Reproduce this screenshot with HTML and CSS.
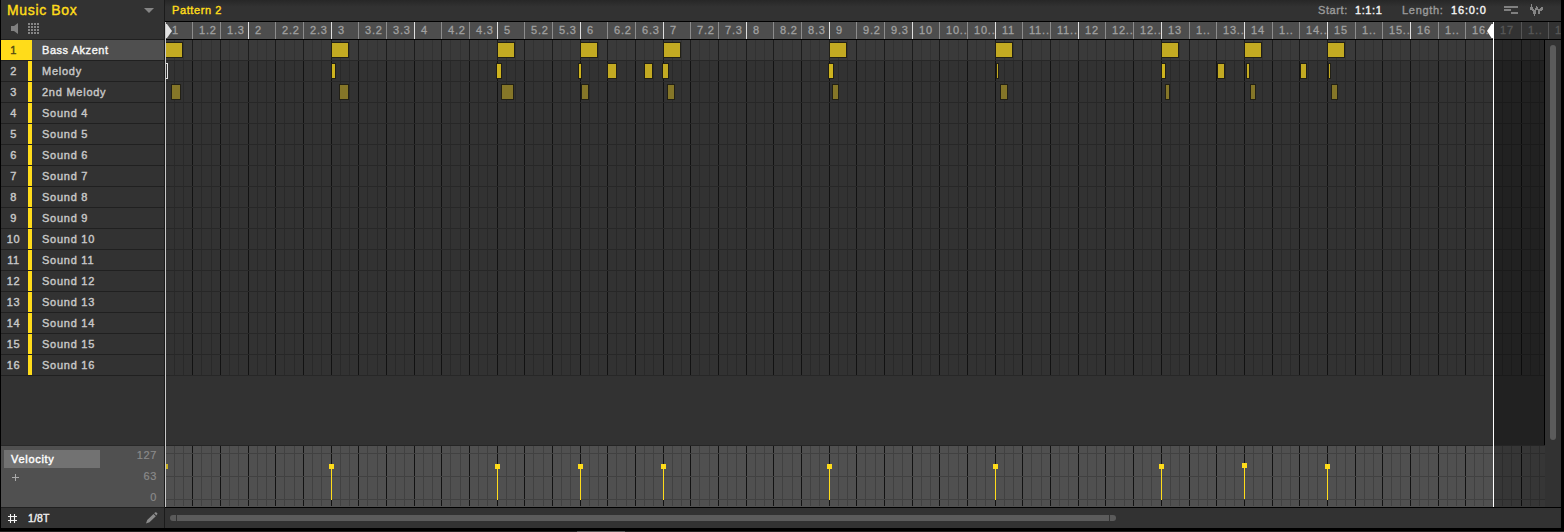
FILE: index.html
```html
<!DOCTYPE html>
<html lang="en">
<head>
<meta charset="utf-8">
<title>Pattern Editor</title>
<link rel="stylesheet" href="styles.css">
</head>
<body>
<div class="app">
  <aside class="sidebar">
    <header class="group">
      <div class="group-title"><span>Music Box</span><svg width="10" height="5" viewBox="0 0 10 5"><path d="M0 0h10L5 5z" fill="#858585"/></svg></div>
      <div class="group-tools">
        <svg width="8" height="11" viewBox="0 0 8 11"><path d="M0 3h3L7 0v11L3 8H0z" fill="#808080"/></svg>
        <svg class="pads" width="12" height="11" viewBox="0 0 12 11"><path d="M0 1h12M0 4h12M0 7h12M0 10h12" stroke="#858585" stroke-width="2" stroke-dasharray="2 1"/></svg>
      </div>
    </header>
    <ol class="sounds" id="sounds"></ol>
    <div class="side-gap"></div>
    <section class="lane-info">
      <div class="lane-names"><div class="lane-active">Velocity</div><svg class="plus" width="7" height="7" viewBox="0 0 7 7"><path d="M3.500 0v7M0 3.500h7" stroke="#aaa"/></svg></div>
      <div class="scale"><span>127</span><span>63</span><span>0</span></div>
    </section>
    <footer class="quantize">
      <svg width="9" height="9" viewBox="0 0 9 9"><path d="M2.500 0v9M6.500 0v9M0 2.500h9M0 6.500h9" stroke="#f4f4f4" stroke-width="1.100"/></svg>
      <span>1/8T</span>
      <svg class="pencil" width="12" height="12" viewBox="0 0 12 12"><path d="M0 11.500L1.200 8 7.500 2 9.800 4.200 3.500 10.200zM8.200 1.300L9.300.3Q10 0 10.900.7 11.900 1.500 11.200 2.300L10.400 3.500z" fill="#8c8c8c"/></svg>
    </footer>
  </aside>
  <main class="editor">
    <header class="pattern-bar">
      <span class="pattern-name">Pattern 2</span>
      <span class="label start">Start:</span><span class="value start-value">1:1:1</span>
      <span class="label length">Length:</span><span class="value length-value">16:0:0</span>
      <svg class="align-icon" width="14" height="8" viewBox="0 0 14 8"><path d="M0 1h14M0 4h7M7 7h7" stroke="#808080" stroke-width="2"/></svg>
      <svg class="wave-icon" width="14" height="12" viewBox="0 0 14 12"><path d="M.5 3v3M1.500 0v6M2.500 3v4M3.500 5v5M4.500 6v6M5.500 4v6M6.500 2v4M7.500 3v3M8.500 5v5M9.500 5v5M10.500 4v3M11.500 3v4M12.500 3v3" stroke="#858585"/></svg>
    </header>
    <div class="ruler" id="ruler"></div>
    <div class="body">
      <div class="canvas" id="canvas">
        <div class="bars" id="bars"></div>
        <div class="rows" id="rows"></div>
        <div class="outside"></div>
      </div>
      <div class="vscroll"><div class="vthumb"></div></div>
    </div>
    <div class="velocity" id="velocity">
      <div class="bars" id="vbars"></div>
      <div class="levels"><i></i><i></i><i></i></div>
      <div class="outside"></div>
    </div>
    <div class="hscroll"><div class="hthumb"></div></div>
    <div class="playhead"></div>
    <div class="endline"></div>
    <svg class="start-flag" width="7" height="14" viewBox="0 0 7 14"><path d="M0 0h1L6 7 1 14H0z" fill="#e2e2e2"/></svg>
    <svg class="end-flag" width="6" height="14" viewBox="0 0 6 14"><path d="M6 0H4.500L0 7l4.500 7H6z" fill="#fff"/></svg>
  </main>
  <div class="dock"></div>
</div>
<script src="script.js"></script>
</body>
</html>
```
FILE: styles.css
```css
* { box-sizing: border-box; }
body { margin: 0; background: #000; font: 11px/20px "Liberation Sans", Arial, sans-serif; letter-spacing: .6px; -webkit-text-stroke: .4px; color: #c8c8c8; overflow: hidden; }
svg { display: block; flex: none; }
.app { position: relative; width: 1564px; height: 532px; padding: 0 3px 4px 1px; display: flex; background: #000; }
.sidebar { width: 164px; height: 528px; display: flex; flex-direction: column; background: #323232; border-right: 1px solid #1b1b1b; }
.group { height: 39px; flex: none; }
.group-title { display: flex; justify-content: space-between; align-items: center; height: 20px; padding: 0 10px 0 6px; color: #ffdc1a; font-size: 14px; letter-spacing: .65px; }
.group-tools { display: flex; gap: 8px; padding: 3px 0 0 10px; }
.pads { margin-left: 1px; }
.sounds { list-style: none; margin: 0; padding: 0; border-top: 1px solid #202020; }
.sound { display: flex; height: 21px; border-bottom: 1px solid #202020; }
.num { width: 31px; padding-right: 2px; text-align: center; border-right: 4px solid #ffdc1a; }
.name { flex: 1; padding-left: 10px; letter-spacing: .75px; }
.selected .num { background: #ffdc1a; color: #554b12; }
.selected .name { background: #4f4f4f; color: #f5f5f5; letter-spacing: .55px; }
.side-gap { flex: 1; }
.lane-info { height: 62px; display: flex; justify-content: space-between; background: #505050; border-top: 1px solid #282828; }
.lane-active { width: 96px; height: 18px; margin: 4px 0 0 3px; padding-left: 7px; background: #727272; color: #fff; line-height: 18px; letter-spacing: .7px; }
.plus { margin: 6px 0 0 11px; }
.scale { padding-right: 7px; color: #8a8a8a; text-align: right; line-height: 21px; margin-top: -1px; -webkit-text-stroke: .2px; }
.scale span { display: block; }
.quantize { display: flex; height: 21px; flex: none; align-items: center; padding-left: 7px; border-top: 1px solid #202020; color: #eee; font-size: 10.5px; letter-spacing: .1px; }
.quantize span { margin-left: 11px; }
.pencil { margin-left: auto; margin-right: 6px; }
.editor { position: relative; flex: 1; height: 528px; background: #323232; overflow: hidden; }
.pattern-bar { height: 21px; display: flex; align-items: center; padding: 0 17px 1px 7px; background: linear-gradient(#272727, #323232 7px); white-space: nowrap; }
.pattern-name { color: #ffdc1a; margin-right: auto; }
.label { width: 37px; color: #999; }
.label.length { width: 49px; letter-spacing: .7px; }
.value { color: #f4f4f4; }
.start-value { width: 47px; }
.length-value { width: 53px; letter-spacing: .85px; }
.align-icon { margin-right: 12px; }
.ruler { display: flex; height: 19px; border: solid #000; border-width: 1px 0; background: #4d4d4d; overflow: hidden; }
.tick { flex: none; height: 17px; padding-left: 6px; border-left: 1px solid #8c8c8c; color: #a0a0a0; line-height: 17px; white-space: nowrap; overflow: hidden; letter-spacing: .8px; -webkit-text-stroke: .3px; }
.tick.bar { border-color: #dedede; }
.tick.off { background: #323232; color: #575757; border-color: #555; }
.body { display: flex; height: 405px; }
.canvas { position: relative; width: 1380px; height: 405px; border-right: 1px solid #000; overflow: hidden; }
.bars { display: flex; height: 335px; }
.beat { display: flex; flex: none; border-left: 1px solid #121212; }
.beat i { width: 9px; border-left: 1px solid #292929; }
.beat i:first-child { border: 0; width: 8px; }
.beat i.wide { width: 10px; }
.rows { position: absolute; inset: 0; }
.row { position: relative; height: 21px; border-bottom: 1px solid #272727; }
.row:first-child { background: rgba(255,255,255,.045); }
.note { position: absolute; top: 2px; height: 16px; border: 1px solid #222015; background: #c3aa22; }
.note.bright { background: #ceb31e; }
.note.soft { background: #857628; }
.note.ghost { background: #323232; border-color: #e3e3e3; }
.outside { position: absolute; left: 1329px; right: 0; top: 0; bottom: 0; background: rgba(0,0,0,.32); }
.vscroll { flex: 1; padding: 5px 0 0 5px; }
.vthumb { width: 6px; height: 395px; border-radius: 3px; background: #5b5b5b; }
.velocity { position: relative; width: 1380px; height: 62px; border-top: 1px solid #252525; background: #505050; overflow: hidden; }
.velocity .bars { height: 60px; }
.velocity .beat i { border-color: #414141; }
.levels { position: absolute; inset: 7px 0 0; display: flex; flex-direction: column; gap: 22px; }
.levels i { height: 1px; background: #414141; }
.hit { position: absolute; width: 5px; height: 36px; background: linear-gradient(#ffdc1a, #ffdc1a) 2px 5px / 1px 31px no-repeat, linear-gradient(#ffdc1a, #ffdc1a) 0 0 / 5px 5px no-repeat; }
.hit.first { background: linear-gradient(#c9af20, #c9af20) 0 0 / 5px 5px no-repeat; }
.hscroll { height: 21px; border-top: 1px solid #000; padding: 7px 0 0 5px; }
.hthumb { width: 946px; height: 6px; border-radius: 3px; background: linear-gradient(90deg, #5b5b5b 6px, #333 6px 7px, #5b5b5b 7px 939px, #333 939px 940px, #5b5b5b 940px); }
.playhead { position: absolute; left: 0; top: 22px; width: 1px; height: 485px; background: #c8c8c8; }
.endline { position: absolute; left: 1328px; top: 22px; width: 1px; height: 485px; background: #fff; }
.start-flag { position: absolute; left: 1px; top: 24px; }
.end-flag { position: absolute; left: 1322px; top: 24px; }
.dock { position: absolute; left: 0; right: 0; bottom: 0; height: 1px; background: linear-gradient(90deg, #222 577px, #555 577px 625px, #222 625px); }
```
FILE: script.js
```js
const el = (parent, cls, text = '', tag = 'div') => {
  const node = document.createElement(tag);
  node.className = cls;
  node.textContent = text;
  parent.appendChild(node);
  return node;
};
const get = id => document.getElementById(id);

const names = ['Bass Akzent', 'Melody', '2nd Melody'];
for (let n = 1; n <= 16; n++) {
  const item = el(get('sounds'), n === 1 ? 'sound selected' : 'sound', '', 'li');
  el(item, 'num', n, 'span');
  el(item, 'name', names[n - 1] || 'Sound ' + n, 'span');
}

const ORIGIN = 165;
const labels = {
  '10.2': '10..', '10.3': '10..', '11.2': '11..', '11.3': '11..', '12.2': '12..', '12.3': '12..',
  '13.2': '1..', '13.3': '13..', '14.2': '1..', '14.3': '14..', '15.2': '1..', '15.3': '15..',
  '16.2': '1..', '16.3': '16.', '17.2': '1..', '17.3': '1'
};
for (let bar = 1; bar <= 17; bar++) {
  const widths = bar < 13 ? [27, 28, 28] : [28, 27, 28];
  widths.forEach((w, i) => {
    const key = i ? bar + '.' + (i + 1) : String(bar);
    const tick = el(get('ruler'), 'tick' + (i ? '' : ' bar') + (bar > 16 ? ' off' : ''), labels[key] || key);
    tick.style.width = w + 'px';
    for (const id of ['bars', 'vbars']) {
      const beat = el(get(id), 'beat');
      beat.style.width = w + 'px';
      el(beat, '', '', 'i');
      el(beat, i === 1 && w === 28 ? 'wide' : '', '', 'i');
      el(beat, '', '', 'i');
    }
  });
}

const starts = [165, 331, 497, 580, 663, 829, 995, 1161, 1244, 1327];
const notes = [
  starts.map(x => [x, x + 18]),
  [[165, 168, 'ghost'], [331, 336, 'bright'], [496, 502, 'bright'], [578, 582, 'bright'], [607, 617], [644, 653],
   [662, 669], [828, 834, 'bright'], [996, 999], [1161, 1166, 'bright'], [1217, 1225], [1246, 1250],
   [1300, 1307], [1328, 1331]],
  [[171, 181], [339, 349], [501, 514], [581, 589], [667, 675], [832, 839], [1000, 1008], [1165, 1170], [1250, 1256], [1331, 1338]]
];
for (let r = 0; r < 16; r++) {
  const row = el(get('rows'), 'row');
  (notes[r] || []).forEach(([a, b, kind]) => {
    const note = el(row, 'note ' + (r === 2 ? 'soft' : kind || ''));
    note.style.left = a - ORIGIN + 'px';
    note.style.width = b - a + 'px';
  });
}
starts.forEach((x, i) => {
  const hit = el(get('velocity'), i ? 'hit' : 'hit first');
  hit.style.left = x - ORIGIN - 2 + 'px';
  hit.style.top = (x === 1244 ? 17 : 18) + 'px';
});
```
